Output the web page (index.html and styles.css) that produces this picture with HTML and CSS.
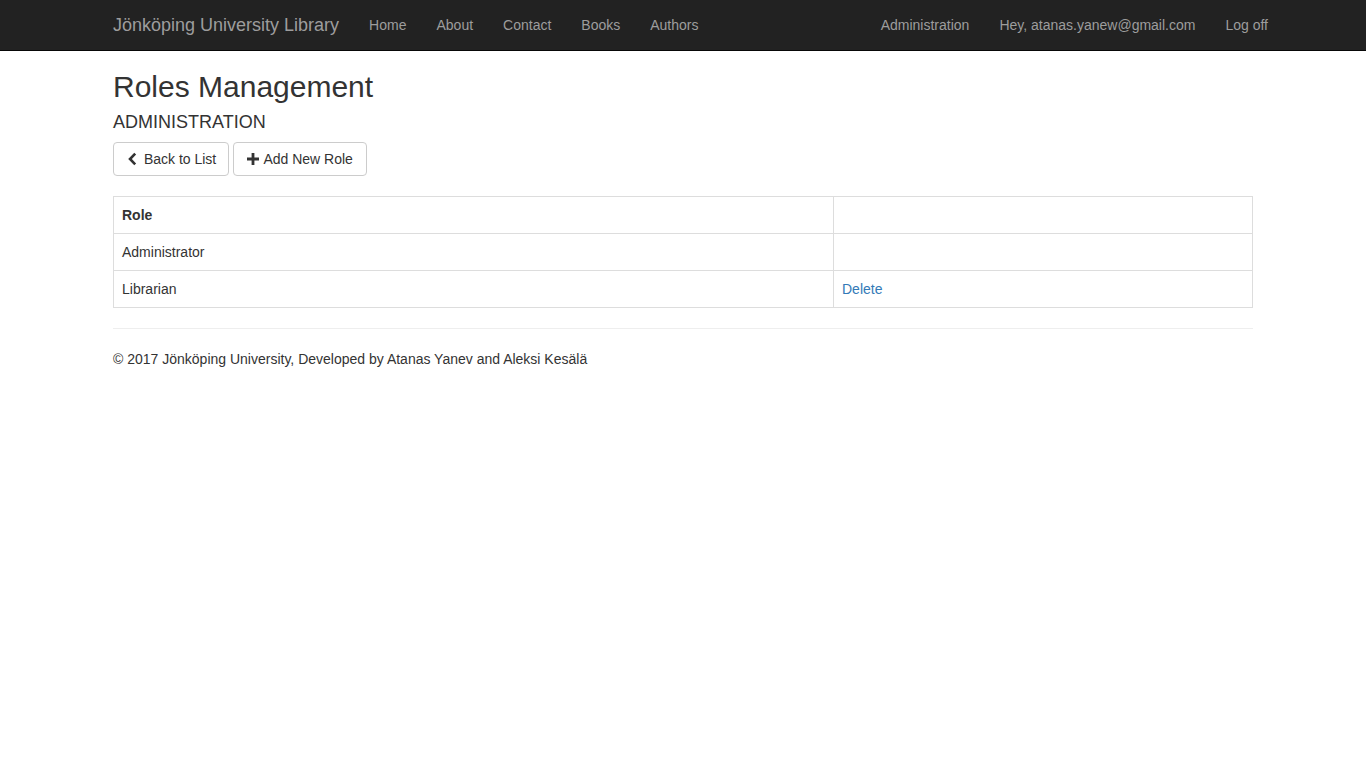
FILE: index.html
```html
<!DOCTYPE html>
<html lang="en">
<head>
<meta charset="utf-8">
<title>Roles Management</title>
<link rel="stylesheet" href="styles.css">
</head>
<body>
<nav class="navbar">
  <div class="navbar-inner">
    <a class="brand" href="#">Jönköping University Library</a>
    <ul class="nav">
      <li><a href="#">Home</a></li>
      <li><a href="#">About</a></li>
      <li><a href="#">Contact</a></li>
      <li><a href="#">Books</a></li>
      <li><a href="#">Authors</a></li>
    </ul>
    <ul class="nav nav-right">
      <li><a href="#">Administration</a></li>
      <li><a href="#">Hey, atanas.yanew@gmail.com</a></li>
      <li><a href="#">Log off</a></li>
    </ul>
  </div>
</nav>
<main class="container">
  <h2 class="title">Roles Management</h2>
  <h4 class="subtitle">ADMINISTRATION</h4>
  <div class="actions">
    <a class="btn" href="#"><svg class="icon" viewBox="0 0 14 14" width="14" height="14"><path d="M9.2 1.6 L4 7 L9.2 12.4" fill="none" stroke="#333" stroke-width="2.6" stroke-linejoin="miter"/></svg> Back to List</a>
    <a class="btn btn-wide" href="#"><svg class="icon" viewBox="0 0 14 14" width="14" height="14"><path d="M5.6 1 H8.4 V5.6 H13 V8.4 H8.4 V13 H5.6 V8.4 H1 V5.6 H5.6 Z" fill="#333"/></svg> Add New Role</a>
  </div>
  <table class="table">
    <thead>
      <tr><th class="col-role">Role</th><th></th></tr>
    </thead>
    <tbody>
      <tr><td>Administrator</td><td></td></tr>
      <tr><td>Librarian</td><td><a class="link" href="#">Delete</a></td></tr>
    </tbody>
  </table>
  <hr class="rule">
  <footer class="footer">
    <p>© 2017 Jönköping University, Developed by Atanas Yanev and Aleksi Kesälä</p>
  </footer>
</main>
</body>
</html>
```
FILE: styles.css
```css
* { box-sizing: border-box; }
html, body { margin: 0; padding: 0; }
body {
  font-family: "Liberation Sans", Arial, Helvetica, sans-serif;
  font-size: 14px;
  line-height: 20px;
  color: #333;
  background: #fff;
  padding-top: 50px;
}
a { text-decoration: none; }

.navbar {
  position: fixed;
  top: 0; left: 0; right: 0;
  height: 51px;
  background: #222;
  border-bottom: 1px solid #080808;
  z-index: 10;
}
.navbar-inner {
  width: 1170px;
  margin: 0 auto;
  padding: 0 15px;
  display: flex;
  align-items: flex-start;
}
.brand {
  font-size: 18px;
  line-height: 20px;
  padding: 15px 15px;
  margin-left: -15px;
  color: #9d9d9d;
}
.nav {
  list-style: none;
  margin: 0;
  padding: 0;
  display: flex;
}
.nav a {
  display: block;
  padding: 15px;
  line-height: 20px;
  color: #9d9d9d;
}
.nav-right { margin-left: auto; margin-right: -30px; }

.container {
  width: 1170px;
  margin: 0 auto;
  padding: 0 15px;
}
.title {
  font-size: 30px;
  font-weight: 500;
  line-height: 33px;
  margin: 20px 0 10px;
}
.subtitle {
  font-size: 18px;
  font-weight: 500;
  line-height: 19px;
  margin: 10px 0 10px;
}
.actions {
  display: flex;
  gap: 4px;
}
.btn {
  display: inline-flex;
  align-items: center;
  height: 34px;
  padding: 6px 12px;
  border: 1px solid #ccc;
  border-radius: 4px;
  color: #333;
  background: #fff;
  font-size: 14px;
  line-height: 20px;
  white-space: pre;
}
.btn-wide { padding-right: 13px; }
.icon { display: block; margin-right: 0; }

.table {
  width: 100%;
  margin: 20px 0 20px;
  border-collapse: collapse;
  border: 1px solid #ddd;
}
.table th, .table td {
  border: 1px solid #ddd;
  padding: 8px;
  line-height: 20px;
  text-align: left;
  vertical-align: top;
  height: 37px;
}
.table th { font-weight: bold; }
.col-role { width: 720px; }
.link { color: #337ab7; }

.rule {
  border: 0;
  border-top: 1px solid #eee;
  margin: 20px 0;
  height: 0;
}
.footer p { margin: 0 0 10px; }
```
